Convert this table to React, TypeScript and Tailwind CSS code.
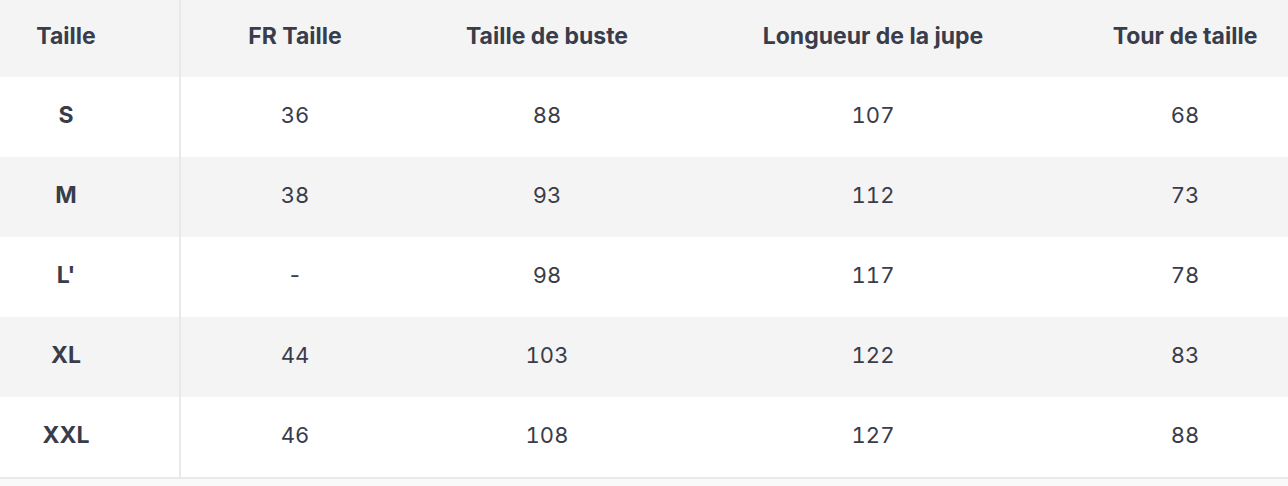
const headers = ["Taille", "FR Taille", "Taille de buste", "Longueur de la jupe", "Tour de taille"];

const rows = [
  ["S", "36", "88", "107", "68"],
  ["M", "38", "93", "112", "73"],
  ["L'", "-", "98", "117", "78"],
  ["XL", "44", "103", "122", "83"],
  ["XXL", "46", "108", "127", "88"],
];

const cols = "grid grid-cols-[181px_228px_276px_376px_248px]";

export default function App() {
  return (
    <div className="w-[1288px] h-[486px] overflow-hidden bg-[#f9f9f9] font-['Inter',sans-serif] text-[#393c4a]">
      <div className="border-b-2 border-[#e9e9e9]">
        <div className={`${cols} h-[77px] bg-[#f4f4f4] text-[23px] font-bold`}>
          {headers.map((h, i) => (
            <div
              key={h}
              className={
                i === 0
                  ? "flex items-center justify-center pb-[5px] pr-[47px] border-r-2 border-[#e9e9e9]"
                  : "flex items-center justify-center pb-[5px]"
              }
            >
              {h}
            </div>
          ))}
        </div>
        {rows.map((r, ri) => (
          <div
            key={r[0]}
            className={`${cols} h-[80px] text-[22px] tabular-nums ${ri % 2 === 0 ? "bg-white" : "bg-[#f4f4f4]"}`}
          >
            {r.map((c, ci) => (
              <div
                key={ci}
                className={
                  ci === 0
                    ? "flex items-center justify-center pb-[3px] pr-[47px] text-[23px] font-bold border-r-2 border-[#e9e9e9]"
                    : "flex items-center justify-center pb-[3px]"
                }
              >
                {c}
              </div>
            ))}
          </div>
        ))}
      </div>
    </div>
  );
}
